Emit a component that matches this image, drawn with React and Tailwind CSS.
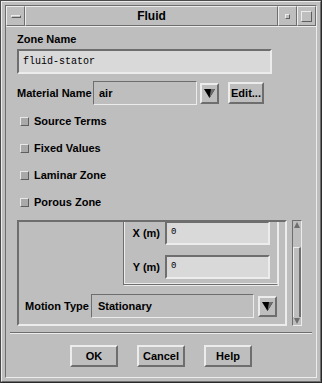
import React from 'react';

const raised = 'border-t-2 border-l-2 border-t-[#ececec] border-l-[#ececec] border-b-2 border-r-2 border-b-[#6e6e6e] border-r-[#6e6e6e]';
const sunken = 'border-t-2 border-l-2 border-t-[#6e6e6e] border-l-[#6e6e6e] border-b-2 border-r-2 border-b-[#ececec] border-r-[#ececec]';

function Arrow() {
    return (
        <div className={`w-[19px] h-[21px] bg-[#bebebe] flex items-center justify-center ${raised}`}>
            <svg width="11" height="11" viewBox="0 0 11 11">
                <polygon points="0,1 11,1 5.5,10" fill="#000" />
                <polygon points="7,1 11,1 5.5,10" fill="#6e6e6e" />
            </svg>
        </div>
    );
}

function Toggle({ label }) {
    return (
        <div className="flex items-center h-[14px] pl-[3px]">
            <div className="w-[9px] h-[9px] bg-[#a9a9a9] border border-t-[#e8e8e8] border-l-[#e8e8e8] border-b-[#5e5e5e] border-r-[#5e5e5e]" />
            <span className="ml-[5px] text-[11px] font-bold leading-none">{label}</span>
        </div>
    );
}

function Button({ children }) {
    return (
        <button className={`w-[48px] h-[22px] bg-[#bebebe] text-[11px] font-bold leading-none ${raised}`}>
            {children}
        </button>
    );
}

export default function App() {
    return (
        <div className="w-[322px] h-[383px] bg-[#bebebe] font-['Liberation_Sans',sans-serif] text-black relative border border-t-[#4a4a4a] border-l-[#4a4a4a] border-b-[#2a2a2a] border-r-[#2a2a2a] overflow-hidden">
            <div className="w-full h-full border border-t-[#ececec] border-l-[#ececec] border-b-[#6e6e6e] border-r-[#6e6e6e] p-[3px]">
                <div className="w-full h-full flex flex-col border border-t-[#6e6e6e] border-l-[#6e6e6e] border-b-[#ececec] border-r-[#ececec]">
                    {/* title bar */}
                    <div className="h-[20px] flex shrink-0">
                        <div className="w-[19px] h-full flex items-center justify-center border border-t-[#ececec] border-l-[#ececec] border-b-[#6e6e6e] border-r-[#6e6e6e]">
                            <div className="w-[10px] h-[3px] bg-[#bebebe] border border-t-[#ececec] border-l-[#ececec] border-b-[#5e5e5e] border-r-[#5e5e5e]" />
                        </div>
                        <div className="flex-1 h-full flex items-center justify-center border border-t-[#ececec] border-l-[#ececec] border-b-[#6e6e6e] border-r-[#6e6e6e]">
                            <span className="text-[12px] font-bold leading-none">Fluid</span>
                        </div>
                        <div className="w-[19px] h-full flex items-center justify-center border border-t-[#ececec] border-l-[#ececec] border-b-[#6e6e6e] border-r-[#6e6e6e]">
                            <div className="w-[5px] h-[5px] bg-[#bebebe] border border-t-[#ececec] border-l-[#ececec] border-b-[#5e5e5e] border-r-[#5e5e5e]" />
                        </div>
                        <div className="w-[19px] h-full flex items-center justify-center border border-t-[#ececec] border-l-[#ececec] border-b-[#6e6e6e] border-r-[#6e6e6e]">
                            <div className="w-[11px] h-[11px] bg-[#bebebe] border border-t-[#ececec] border-l-[#ececec] border-b-[#5e5e5e] border-r-[#5e5e5e]" />
                        </div>
                    </div>

                    {/* dialog body */}
                    <div className="flex-1 flex flex-col border-t border-t-[#ececec] px-[3px]">
                        <div className="pl-[8px] pt-[6px] flex flex-col">
                            <span className="text-[11px] font-bold leading-[12px]">Zone Name</span>
                            <div className={`mt-[4px] w-[255px] h-[25px] bg-[#d9d9d9] flex items-center pl-[4px] ${sunken}`}>
                                <span className="font-['Liberation_Mono',monospace] text-[10px]">fluid-stator</span>
                            </div>

                            <div className="mt-[7px] flex items-center h-[24px]">
                                <span className="text-[11px] font-bold leading-none w-[76px]">Material Name</span>
                                <div className="w-[104px] h-[24px] flex items-center pl-[5px] border border-t-[#6e6e6e] border-l-[#6e6e6e] border-b-[#ececec] border-r-[#ececec]">
                                    <span className="text-[11px] font-bold leading-none">air</span>
                                </div>
                                <div className="ml-[3px]"><Arrow /></div>
                                <button className={`ml-[9px] w-[36px] h-[22px] bg-[#bebebe] text-[11px] font-bold leading-none ${raised}`}>Edit...</button>
                            </div>

                            <div className="mt-[9px] flex flex-col gap-[13px]">
                                <Toggle label="Source Terms" />
                                <Toggle label="Fixed Values" />
                                <Toggle label="Laminar Zone" />
                                <Toggle label="Porous Zone" />
                            </div>

                            {/* scrolled panel */}
                            <div className="mt-[11px] flex h-[106px]">
                                <div className={`w-[270px] h-full overflow-hidden flex flex-col ${sunken}`}>
                                    <div className="flex justify-end pr-[7px] -mt-[7px]">
                                        <div className="w-[155px] h-[70px] flex flex-col justify-end pb-[5px] border-l border-b border-l-[#6e6e6e] border-b-[#6e6e6e] border-r border-r-[#ececec] shadow-[inset_1px_-1px_0_#ececec,1px_1px_0_#ececec]">
                                            <div className="flex items-center">
                                                <span className="w-[41px] text-right pr-[5px] text-[11px] font-bold leading-none">X (m)</span>
                                                <div className={`w-[105px] h-[24px] bg-[#d9d9d9] flex items-center pl-[4px] ${sunken}`}>
                                                    <span className="font-['Liberation_Mono',monospace] text-[9px]">0</span>
                                                </div>
                                            </div>
                                            <div className="flex items-center mt-[10px]">
                                                <span className="w-[41px] text-right pr-[5px] text-[11px] font-bold leading-none">Y (m)</span>
                                                <div className={`w-[105px] h-[24px] bg-[#d9d9d9] flex items-center pl-[4px] ${sunken}`}>
                                                    <span className="font-['Liberation_Mono',monospace] text-[9px]">0</span>
                                                </div>
                                            </div>
                                        </div>
                                    </div>
                                    <div className="flex items-center mt-[9px] pl-[6px]">
                                        <span className="text-[11px] font-bold leading-none w-[66px]">Motion Type</span>
                                        <div className="w-[163px] h-[24px] flex items-center pl-[6px] border border-t-[#6e6e6e] border-l-[#6e6e6e] border-b-[#ececec] border-r-[#ececec]">
                                            <span className="text-[11px] font-bold leading-none">Stationary</span>
                                        </div>
                                        <div className="ml-[4px]"><Arrow /></div>
                                    </div>
                                </div>
                                {/* scrollbar */}
                                <div className="ml-[5px] w-[10px] h-full flex flex-col bg-[#bebebe] border border-t-[#6e6e6e] border-l-[#6e6e6e] border-b-[#ececec] border-r-[#ececec]">
                                    <div className="h-[8px] flex items-start justify-center pt-[1px]">
                                        <svg width="6" height="6" viewBox="0 0 6 6"><polygon points="3,0 6,6 0,6" fill="#6e6e6e" /></svg>
                                    </div>
                                    <div className="mt-[18px] flex-1 border-l border-t border-l-[#ececec] border-t-[#ececec] border-r-2 border-r-[#6e6e6e]" />
                                    <div className="h-[8px] flex items-end justify-center pb-[1px]">
                                        <svg width="6" height="6" viewBox="0 0 6 6"><polygon points="0,0 6,0 3,6" fill="#6e6e6e" /></svg>
                                    </div>
                                </div>
                            </div>
                        </div>

                        {/* separator */}
                        <div className="mt-[6px] mx-[1px] border-t border-t-[#6e6e6e] border-b border-b-[#ececec]" />

                        <div className="mt-[11px] flex justify-center gap-[19px]">
                            <Button>OK</Button>
                            <Button>Cancel</Button>
                            <Button>Help</Button>
                        </div>
                    </div>
                </div>
            </div>
        </div>
    );
}
